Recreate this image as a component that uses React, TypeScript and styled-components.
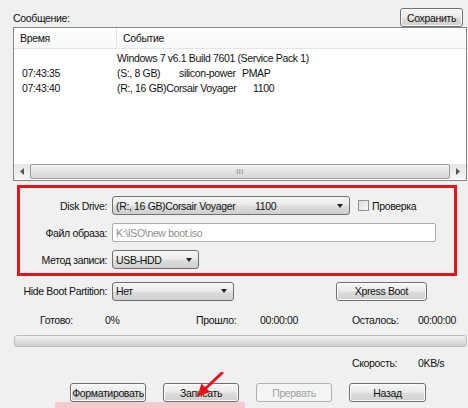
import React from 'react';
import styled, { createGlobalStyle } from 'styled-components';

const GlobalStyle = createGlobalStyle`
  html, body {
    margin: 0;
    padding: 0;
    background: #f0f0f0;
  }
  body {
    font-family: "Liberation Sans", Arial, sans-serif;
    font-size: 10.5px;
    letter-spacing: -0.35px;
    color: #111;
  }
`;

type LogRow = { time: string; parts: { text: string; w?: number }[] };

const logRows: LogRow[] = [
  { time: '', parts: [{ text: 'Windows 7 v6.1 Build 7601 (Service Pack 1)' }] },
  {
    time: '07:43:35',
    parts: [
      { text: '(S:, 8 GB)', w: 62 },
      { text: 'silicon-power', w: 63 },
      { text: 'PMAP' },
    ],
  },
  {
    time: '07:43:40',
    parts: [{ text: '(R:, 16 GB)Corsair Voyager', w: 136 }, { text: '1100' }],
  },
];

function App() {
  return (
    <>
      <GlobalStyle />
      <Window>
        <TopBar>
          <Caption>Сообщение:</Caption>
          <Button $w={63}>Сохранить</Button>
        </TopBar>

        <ListBox>
          <ListHead>
            <HeadCell $w={102}>Время</HeadCell>
            <HeadCell>Событие</HeadCell>
          </ListHead>
          <ListBody>
            {logRows.map((row, i) => (
              <ListRow key={i}>
                <TimeCell>{row.time}</TimeCell>
                <EventCell>
                  {row.parts.map((p, j) => (
                    <Piece key={j} $w={p.w}>
                      {p.text}
                    </Piece>
                  ))}
                </EventCell>
              </ListRow>
            ))}
          </ListBody>
          <HScroll>
            <ScrollArrow>
              <svg width="4" height="7" viewBox="0 0 4 7">
                <path d="M4 0 L0 3.5 L4 7 Z" fill="#555" />
              </svg>
            </ScrollArrow>
            <ScrollThumb>
              <Grip>III</Grip>
            </ScrollThumb>
            <ScrollArrow>
              <svg width="4" height="7" viewBox="0 0 4 7">
                <path d="M0 0 L4 3.5 L0 7 Z" fill="#555" />
              </svg>
            </ScrollArrow>
          </HScroll>
        </ListBox>

        <Highlight>
          <Label>Disk Drive:</Label>
          <Line>
            <Combo $w={238}>
              <ComboText>
                <Piece $w={139}>(R:, 16 GB)Corsair Voyager</Piece>
                <Piece>1100</Piece>
              </ComboText>
              <DropArrow />
            </Combo>
            <CheckLabel>
              <CheckBox />
              Проверка
            </CheckLabel>
          </Line>

          <Label>Файл образа:</Label>
          <Line>
            <TextField $w={324}>K:\ISO\new boot.iso</TextField>
          </Line>

          <Label>Метод записи:</Label>
          <Line>
            <Combo $w={87}>
              <ComboText>USB-HDD</ComboText>
              <DropArrow />
            </Combo>
          </Line>
        </Highlight>

        <FormRow>
          <Label>Hide Boot Partition:</Label>
          <Line>
            <Combo $w={122}>
              <ComboText>Нет</ComboText>
              <DropArrow />
            </Combo>
            <Button $w={91} $gapLeft={102}>
              Xpress Boot
            </Button>
          </Line>
        </FormRow>

        <StatRow $top={12}>
          <span>Готово:</span>
          <span>0%</span>
          <span>Прошло:</span>
          <span>00:00:00</span>
          <span>Осталось:</span>
          <span>00:00:00</span>
        </StatRow>

        <Progress />

        <StatRow $top={9}>
          <Skip>Скорость:</Skip>
          <span>0KB/s</span>
        </StatRow>

        <ButtonBar>
          <Button $w={76}>Форматировать</Button>
          <Button $w={76}>Записать</Button>
          <Button $w={76} disabled>
            Прервать
          </Button>
          <Button $w={77}>Назад</Button>
        </ButtonBar>
        <PinkStrip />

        <Arrow width="32" height="28" viewBox="0 0 32 28">
          <path d="M29 1 L12 17" stroke="#e3141b" strokeWidth="3" strokeLinecap="round" />
          <path d="M4 25 L8.5 11.5 L17 20 Z" fill="#e3141b" />
        </Arrow>
      </Window>
    </>
  );
}

export default App;

const Window = styled.div`
  position: relative;
  width: 468px;
  height: 408px;
  box-sizing: border-box;
  padding: 8px 1px 0 13px;
  display: flex;
  flex-direction: column;
  overflow: hidden;
  background: #f0f0f0;
`;

const TopBar = styled.div`
  display: flex;
  justify-content: space-between;
  align-items: center;
  height: 19px;
  margin-right: 4px;
`;

const Caption = styled.span`
  padding-top: 1px;
`;

const Button = styled.button<{ $w: number; $gapLeft?: number }>`
  width: ${({ $w }) => $w}px;
  height: 19px;
  margin-left: ${({ $gapLeft }) => ($gapLeft ? `${$gapLeft}px` : '0')};
  padding: 0;
  box-sizing: border-box;
  border: 1px solid #707070;
  border-radius: 3px;
  background: linear-gradient(#f6f6f6 0%, #ebebeb 48%, #dddddd 52%, #cfcfcf 100%);
  font: inherit;
  letter-spacing: inherit;
  color: #111;
  box-shadow: inset 0 0 0 1px #fcfcfc;

  &:disabled {
    border-color: #adb2b5;
    background: #f4f4f4;
    color: #a0a0a0;
    box-shadow: none;
  }
`;

const ListBox = styled.div`
  height: 157px;
  box-sizing: border-box;
  border: 1px solid #828790;
  background: #fff;
  display: flex;
  flex-direction: column;
`;

const ListHead = styled.div`
  display: flex;
  height: 20px;
  border-bottom: 1px solid #e5e5e5;
  background: linear-gradient(#ffffff, #f7f8f9);
`;

const HeadCell = styled.div<{ $w?: number }>`
  display: flex;
  align-items: center;
  padding-left: 6px;
  ${({ $w }) => ($w ? `width: ${$w - 6}px; border-right: 1px solid #e5e5e5;` : 'flex: 1;')}
`;

const ListBody = styled.div`
  flex: 1;
  padding-top: 2px;
`;

const ListRow = styled.div`
  display: flex;
  height: 15px;
  line-height: 15px;
`;

const TimeCell = styled.div`
  width: 95px;
  padding-left: 8px;
`;

const EventCell = styled.div`
  display: flex;
  white-space: nowrap;
`;

const Piece = styled.span<{ $w?: number }>`
  display: inline-block;
  ${({ $w }) => ($w ? `width: ${$w}px;` : '')}
  white-space: pre;
`;

const HScroll = styled.div`
  display: flex;
  height: 15px;
  margin-bottom: 1px;
  background: linear-gradient(#e6e6e6, #f4f4f4);
`;

const ScrollArrow = styled.div`
  width: 16px;
  display: flex;
  align-items: center;
  justify-content: center;
`;

const ScrollThumb = styled.div`
  flex: 1;
  box-sizing: border-box;
  border: 1px solid #9a9a9a;
  border-radius: 2px;
  background: linear-gradient(#f5f5f5, #e3e3e3 50%, #d6d6d6);
  display: flex;
  align-items: center;
  justify-content: center;
`;

const Grip = styled.span`
  font-size: 7px;
  letter-spacing: 0.5px;
  color: #777;
`;

const Highlight = styled.div`
  margin: 4px 0 0 4px;
  width: 440px;
  height: 92px;
  box-sizing: border-box;
  border: 3px solid #e3141b;
  padding-top: 8px;
  display: grid;
  grid-template-columns: 87px 1fr;
  grid-auto-rows: 19px;
  column-gap: 5px;
  row-gap: 8px;
`;

const FormRow = styled.div`
  margin: 6px 0 0 7px;
  display: grid;
  grid-template-columns: 87px 1fr;
  grid-auto-rows: 19px;
  column-gap: 5px;
`;

const Label = styled.div`
  display: flex;
  align-items: center;
  justify-content: flex-end;
  white-space: nowrap;
`;

const Line = styled.div`
  display: flex;
  align-items: center;
`;

const Combo = styled.div<{ $w: number }>`
  width: ${({ $w }) => $w}px;
  height: 19px;
  box-sizing: border-box;
  border: 1px solid #707070;
  border-radius: 3px;
  background: linear-gradient(#f6f6f6 0%, #ebebeb 48%, #dddddd 52%, #cfcfcf 100%);
  display: flex;
  align-items: center;
  padding: 0 6px 0 3px;
`;

const ComboText = styled.div`
  flex: 1;
  display: flex;
  white-space: nowrap;
  overflow: hidden;
`;

const DropArrow = styled.span`
  width: 0;
  height: 0;
  border-left: 3.5px solid transparent;
  border-right: 3.5px solid transparent;
  border-top: 4px solid #222;
`;

const CheckLabel = styled.label`
  display: flex;
  align-items: center;
  gap: 3px;
  margin-left: 8px;
`;

const CheckBox = styled.span`
  width: 11px;
  height: 11px;
  box-sizing: border-box;
  border: 1px solid #8f8f8f;
  background: linear-gradient(135deg, #dcdcdc, #f8f8f8);
`;

const TextField = styled.div<{ $w: number }>`
  width: ${({ $w }) => $w}px;
  height: 19px;
  box-sizing: border-box;
  border: 1px solid #abadb3;
  border-radius: 2px;
  background: #fff;
  color: #8d8d8d;
  display: flex;
  align-items: center;
  padding-left: 3px;
`;

const StatRow = styled.div<{ $top: number }>`
  margin-top: ${({ $top }) => $top}px;
  padding-left: 27px;
  height: 14px;
  display: grid;
  grid-template-columns: 65px 91px 64px 92px 66px 1fr;
  align-items: center;
  white-space: nowrap;
`;

const Skip = styled.span`
  grid-column: 5;
`;

const Progress = styled.div`
  margin: 8px 0 0 1px;
  height: 13px;
  box-sizing: border-box;
  border: 1px solid #bcbcbc;
  border-radius: 3px;
  background: linear-gradient(#f3f3f3, #e0e0e0 50%, #cdcdcd);
`;

const ButtonBar = styled.div`
  margin-top: 13px;
  padding-left: 57px;
  display: flex;
  gap: 17px;
  height: 19px;
`;

const PinkStrip = styled.div`
  margin: 0 0 0 42px;
  width: 190px;
  height: 6px;
  background: #f6caca;
`;

const Arrow = styled.svg`
  position: absolute;
  left: 193px;
  top: 372px;
`;
